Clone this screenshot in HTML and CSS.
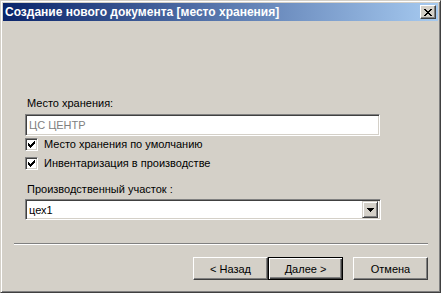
FILE: index.html
```html
<!DOCTYPE html>
<html lang="ru">
<head>
  <meta charset="UTF-8">
  <title>Создание нового документа</title>
  <link rel="stylesheet" href="styles.css">
</head>
<body>
  <div class="dialog">
    <div class="titlebar">
      <span class="title">Создание нового документа [место хранения]</span>
      <span class="close">
        <svg width="8" height="7" viewBox="0 0 8 7" shape-rendering="crispEdges">
          <path d="M0 0h2v1H0zM6 0h2v1H6zM1 1h2v1H1zM5 1h2v1H5zM2 2h4v1H2zM3 3h2v1H3zM2 4h4v1H2zM1 5h2v1H1zM5 5h2v1H5zM0 6h2v1H0zM6 6h2v1H6z" fill="#000"/>
        </svg>
      </span>
    </div>

    <div class="content">
      <div class="form">
        <div class="field-label">Место хранения:</div>
        <div class="edit disabled">ЦС ЦЕНТР</div>

        <label class="check">
          <span class="box">
            <svg width="7" height="7" viewBox="0 0 7 7" shape-rendering="crispEdges">
              <path d="M0 2h1v3H0zM1 3h1v3H1zM2 4h1v3H2zM3 3h1v3H3zM4 2h1v3H4zM5 1h1v3H5zM6 0h1v3H6z" fill="#000"/>
            </svg>
          </span>
          Место хранения по умолчанию
        </label>
        <label class="check">
          <span class="box">
            <svg width="7" height="7" viewBox="0 0 7 7" shape-rendering="crispEdges">
              <path d="M0 2h1v3H0zM1 3h1v3H1zM2 4h1v3H2zM3 3h1v3H3zM4 2h1v3H4zM5 1h1v3H5zM6 0h1v3H6z" fill="#000"/>
            </svg>
          </span>
          Инвентаризация в производстве
        </label>

        <div class="field-label second">Производственный участок :</div>
        <div class="combo">
          <span class="value">цех1</span>
          <span class="drop">
            <svg width="7" height="4" viewBox="0 0 7 4" shape-rendering="crispEdges">
              <path d="M0 0h7v1H0zM1 1h5v1H1zM2 2h3v1H2zM3 3h1v1H3z" fill="#000"/>
            </svg>
          </span>
        </div>
      </div>

      <div class="separator"></div>

      <div class="buttons">
        <div class="btn">&lt; Назад</div>
        <div class="btn default">Далее &gt;</div>
        <div class="btn cancel">Отмена</div>
      </div>
    </div>
  </div>
</body>
</html>
```

FILE: styles.css
```css
html,
body {
  margin: 0;
  padding: 0;
  background: #d4d0c8;
}

body {
  font-family: "Liberation Sans", Arial, sans-serif;
  font-size: 11px;
  color: #000;
}

.dialog {
  box-sizing: border-box;
  width: 441px;
  height: 293px;
  padding: 2px;
  background: #d4d0c8;
  border: 1px solid;
  border-color: #d4d0c8 #404040 #404040 #d4d0c8;
  box-shadow: inset 1px 1px #fff, inset -1px -1px #808080;
  display: flex;
  flex-direction: column;
}

.titlebar {
  height: 18px;
  display: flex;
  align-items: center;
  padding: 0 2px;
  background: linear-gradient(to right, #0a246a, #a6caf0);
}

.titlebar .title {
  flex: 1;
  color: #fff;
  font-weight: bold;
  font-size: 12px;
  line-height: 18px;
  white-space: nowrap;
}

.titlebar .close {
  box-sizing: border-box;
  width: 16px;
  height: 14px;
  display: flex;
  align-items: center;
  justify-content: center;
  background: #d4d0c8;
  border: 1px solid;
  border-color: #fff #404040 #404040 #fff;
  box-shadow: inset -1px -1px #808080;
}

.content {
  flex: 1;
  display: flex;
  flex-direction: column;
}

.form {
  margin: 76px 0 0 22px;
  width: 355px;
}

.field-label {
  line-height: 13px;
  padding-left: 2px;
}

.field-label.second {
  margin-top: 13px;
}

.edit,
.combo {
  box-sizing: border-box;
  background: #fff;
  border: 1px solid;
  border-color: #808080 #fff #fff #808080;
  box-shadow: inset 1px 1px #404040, inset -1px -1px #d4d0c8;
}

.edit {
  margin-top: 4px;
  height: 22px;
  line-height: 20px;
  padding-left: 3px;
}

.edit.disabled {
  color: #808080;
}

.check {
  display: flex;
  align-items: center;
  gap: 6px;
  height: 13px;
  margin-top: 6px;
  line-height: 13px;
}

.edit + .check {
  margin-top: 2px;
}

.check .box {
  box-sizing: border-box;
  width: 13px;
  height: 13px;
  display: flex;
  align-items: center;
  justify-content: center;
  background: #fff;
  border: 1px solid;
  border-color: #808080 #fff #fff #808080;
  box-shadow: inset 1px 1px #404040, inset -1px -1px #d4d0c8;
}

.combo {
  margin-top: 3px;
  height: 21px;
  width: 356px;
  display: flex;
  align-items: center;
  padding: 2px;
}

.combo .value {
  flex: 1;
  padding-left: 1px;
}

.combo .drop {
  box-sizing: border-box;
  width: 16px;
  height: 17px;
  display: flex;
  align-items: center;
  justify-content: center;
  background: #d4d0c8;
  border: 1px solid;
  border-color: #d4d0c8 #404040 #404040 #d4d0c8;
  box-shadow: inset 1px 1px #fff, inset -1px -1px #808080;
}

.separator {
  margin: 23px 10px 0 11px;
  border-top: 1px solid #808080;
  border-bottom: 1px solid #fff;
  height: 0;
}

.buttons {
  display: flex;
  justify-content: flex-end;
  margin: 12px 10px 0 0;
}

.btn {
  box-sizing: border-box;
  width: 75px;
  height: 23px;
  display: flex;
  align-items: center;
  justify-content: center;
  background: #d4d0c8;
  border: 1px solid;
  border-color: #fff #404040 #404040 #fff;
  box-shadow: inset -1px -1px #808080;
}

.btn.default {
  border-color: #000;
  box-shadow: inset 1px 1px #fff, inset -1px -1px #404040, inset -2px -2px #808080;
}

.btn.cancel {
  margin-left: 10px;
}
```
